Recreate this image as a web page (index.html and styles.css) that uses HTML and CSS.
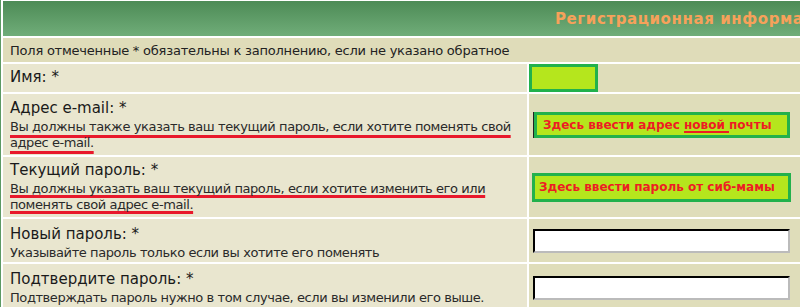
FILE: index.html
```html
<!DOCTYPE html>
<html lang="ru">
<head>
    <meta charset="UTF-8">
    <meta name="viewport" content="width=device-width, initial-scale=1.0">
    <title>Регистрационная информация</title>
    <link rel="stylesheet" href="styles.css">
</head>
<body>
    <div class="frame">
        <table class="profile">
            <!-- Заголовок формы -->
            <tr class="head-row">
                <th colspan="2">Регистрационная информация</th>
            </tr>
            <tr class="note-row">
                <td colspan="2" class="note">Поля отмеченные * обязательны к заполнению, если не указано обратное</td>
            </tr>

            <!-- Имя -->
            <tr class="row-name">
                <td class="label-cell"><span class="label">Имя: *</span></td>
                <td class="field-cell"><div class="mark mark-name"></div></td>
            </tr>

            <!-- E-mail -->
            <tr class="row-email">
                <td class="label-cell">
                    <span class="label">Адрес e-mail: *</span>
                    <span class="desc"><span class="red-line">Вы должны также указать ваш текущий пароль, если хотите поменять свой</span><br><span class="red-line">адрес e-mail.</span></span>
                </td>
                <td class="field-cell">
                    <div class="mark mark-email">Здесь ввести адрес <u>новой </u>почты</div>
                </td>
            </tr>

            <!-- Текущий пароль -->
            <tr class="row-pass">
                <td class="label-cell">
                    <span class="label">Текущий пароль: *</span>
                    <span class="desc"><span class="red-line tight">Вы должны указать ваш текущий пароль, если хотите изменить его или</span><br><span class="red-line tight">поменять свой адрес e-mail.</span></span>
                </td>
                <td class="field-cell">
                    <div class="mark mark-pass">Здесь ввести пароль от сиб-мамы</div>
                </td>
            </tr>

            <!-- Новый пароль -->
            <tr class="row-new">
                <td class="label-cell">
                    <span class="label">Новый пароль: *</span>
                    <span class="desc">Указывайте пароль только если вы хотите его поменять</span>
                </td>
                <td class="field-cell"><input type="password" class="post"></td>
            </tr>

            <!-- Подтверждение -->
            <tr class="row-confirm">
                <td class="label-cell">
                    <span class="label">Подтвердите пароль: *</span>
                    <span class="desc">Подтверждать пароль нужно в том случае, если вы изменили его выше.</span>
                </td>
                <td class="field-cell"><input type="password" class="post"></td>
            </tr>
        </table>
    </div>
</body>
</html>
```

FILE: styles.css
```css
* { box-sizing: border-box;
}

body {
    margin: 0;
    background: #5c9a63;
    font-family: 'DejaVu Sans', 'Verdana', sans-serif;
    color: #1a1a1a;
    overflow: hidden;
}
.frame {
    margin-left: 2px;
    width: 1100px;
}
.profile {
    width: 100%;
    background: #fff;
    border-collapse: separate;
    border-spacing: 2px;
    margin: -1px 0 0 -1px;
}
.profile td, .profile th {
    padding: 0 7px;
}

/* шапка */
.head-row { height: 35px; }
.head-row th {
    background: linear-gradient(#4d8b56, #70ad79);
    color: #f7a15a;
    font-size: 15px;
    font-weight: bold;
    letter-spacing: 0.6px;
    text-align: left;
    padding-left: 552px;
    white-space: nowrap;
}
.note-row { height: 24px; }
.note {
    background: #dfdcb9;
    font-size: 13px;
    letter-spacing: -0.22px;
    color: #222;
    padding-top: 3px;
    white-space: nowrap;
}

/* строки формы */
.row-name { height: 28px; }
.row-email { height: 61px; }
.row-pass { height: 60px; }
.row-new { height: 43px; }
.row-confirm { height: 48px; }

.label-cell {
    width: 524px;
    max-width: 524px;
    background: #e9e6cf;
    vertical-align: middle;
}
.field-cell {
    background: #dfddba;
    vertical-align: middle;
    padding: 0 0 0 2px !important;
}
.label {
    display: block;
    font-size: 15px;
    line-height: 18px;
    margin-bottom: 2px;
}
.desc {
    display: block;
    font-size: 13px;
    line-height: 16px;
    letter-spacing: -0.42px;
    color: #2a2a2a;
    white-space: nowrap;
}
.row-new .label-cell {
    padding-top: 5px;
}
.row-confirm .label-cell { vertical-align: top; padding-top: 6px; }

.red-line {
    text-decoration: underline;
    text-decoration-color: #e8192c;
    text-decoration-thickness: 3px;
    text-underline-offset: 4px;
    text-decoration-skip-ink: none;
}
.red-line.tight { text-underline-offset: 2px; }

/* пометки поверх полей */
.mark {
    border: 3px solid #22b14c;
    background: #b5e61d;
    color: #ed1c24;
    font-size: 12px;
    font-weight: bold;
    white-space: nowrap;
}
.mark u {
    text-decoration-thickness: 2px;
    text-underline-offset: 2px;
}
.mark-name {
    width: 69px;
    height: 28px;
    margin-left: -2px;
}
.mark-email {
    width: 256px;
    height: 26px;
    margin-left: 3px;
    padding: 3px 0 0 6px;
    box-shadow: -1px 0 0 #222;
}
.mark-pass {
    width: 259px;
    height: 29px;
    margin-left: 1px;
    padding: 4px 0 0 4px;
}
.post {
    display: block;
    width: 257px;
    height: 24px;
    margin-left: 2px;
    border: 2px inset #888;
    border-color: #111 #bbb #bbb #111;
    background: #fff;
}
```
